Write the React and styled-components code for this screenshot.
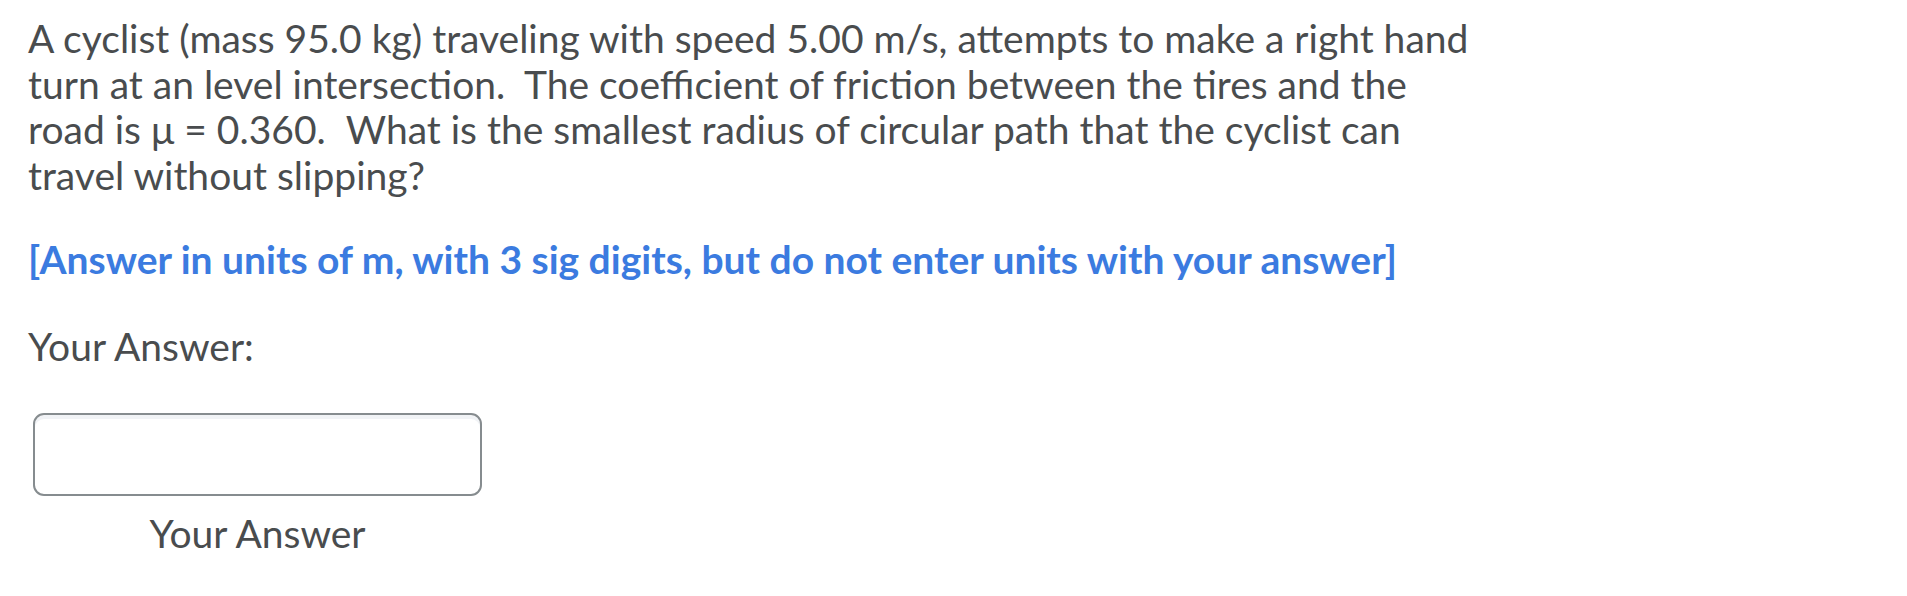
import React from "react";
import styled, { createGlobalStyle } from "styled-components";

const Global = createGlobalStyle`
  html, body { margin: 0; padding: 0; background: #ffffff; }
  body { font-family: Lato, "Open Sans", sans-serif; }
`;

const Page = styled.div`
  padding: 16px 0 0 28px;
  width: 1449px;
  color: #494c4e;
  font-family: Lato, sans-serif;
  font-size: 39px;
  line-height: 45.6px;
`;

const Question = styled.p`
  margin: 0;
`;

const Note = styled.p`
  margin: 39px 0 0;
  color: #3b7be0;
  font-weight: 700;
`;

const Label = styled.p`
  margin: 41px 0 0;
`;

const AnswerField = styled.div`
  margin: 43px 0 0 5px;
  width: 449px;
  display: flex;
  flex-direction: column;
  align-items: center;
  gap: 15px;
`;

const Input = styled.input`
  box-sizing: border-box;
  width: 449px;
  height: 83px;
  border: 2px solid #868c8f;
  border-radius: 11px;
  box-shadow: inset 0 4px 0 0 rgba(185, 194, 208, 0.2);
  background: #ffffff;
  outline: none;
  font: inherit;
  padding: 0 16px;
`;

const Caption = styled.span`
  display: block;
`;

export default function App() {
  return (
    <>
      <Global />
      <Page>
        <Question>
          A cyclist (mass 95.0 kg) traveling with speed 5.00 m/s, attempts to make a right hand turn at an level intersection.&nbsp; The coefficient of friction between the tires and the road is μ = 0.360.&nbsp; What is the smallest radius of circular path that the cyclist can travel without slipping?
        </Question>
        <Note>[Answer in units of m, with 3 sig digits, but do not enter units with your answer]</Note>
        <Label>Your Answer:</Label>
        <AnswerField>
          <Input type="text" aria-label="Your Answer" />
          <Caption>Your Answer</Caption>
        </AnswerField>
      </Page>
    </>
  );
}
